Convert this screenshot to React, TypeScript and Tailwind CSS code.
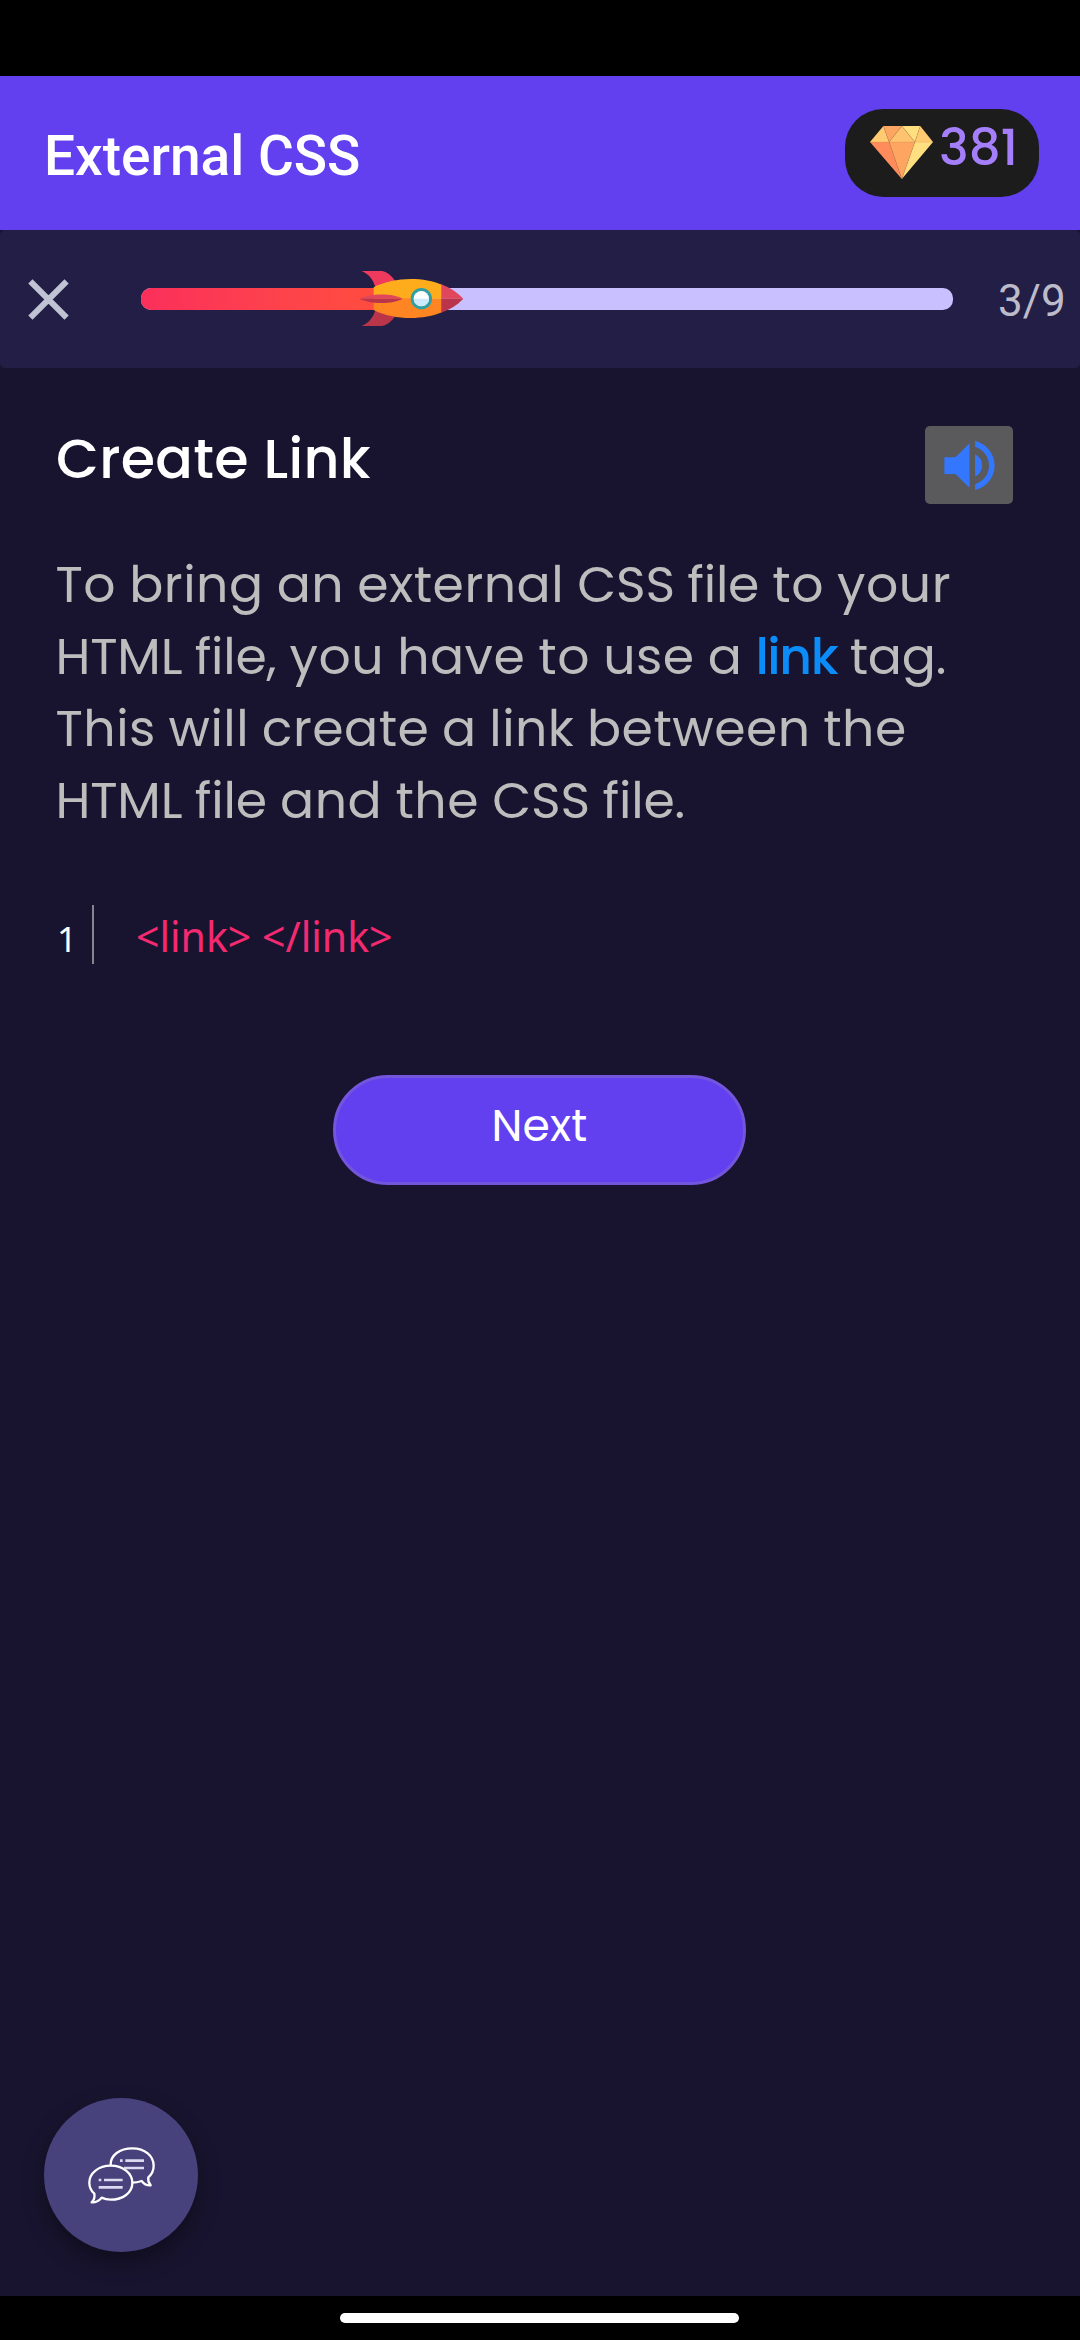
import type { ReactNode } from "react";
import { MdVolumeUp } from "react-icons/md";

const geo = "font-[Poppins,Inter,sans-serif]";

function Diamond() {
  return (
    <svg className="h-[53px] w-[63px] shrink-0" viewBox="150 108 188 158" preserveAspectRatio="none">
      <path d="M190 108L150 156H207Z" fill="#ffca70" />
      <path d="M190 108H245L207 156Z" fill="#ffa562" />
      <path d="M245 108L207 156H284Z" fill="#ffc26e" />
      <path d="M245 108H300L284 156Z" fill="#ffdf80" />
      <path d="M300 108L338 156H284Z" fill="#ffca70" />
      <path d="M150 156H207L245 266Z" fill="#ff8c5a" />
      <path d="M207 156H284L245 266Z" fill="#ffa562" />
      <path d="M284 156H338L245 266Z" fill="#ffdf80" />
      <path d="M150 156H338M190 108L207 156L245 266L284 156L300 108M207 156L245 108L284 156" fill="none" stroke="#c98a4c" strokeOpacity=".55" strokeWidth="1.5" />
    </svg>
  );
}

function Rocket() {
  return (
    <svg className="absolute left-[218px] top-[-17px] h-[55px] w-[105px]" viewBox="57 63 315 165">
      <path d="M64 63H126C142 66 156 78 166 94L106 112C100 88 84 70 64 63Z" fill="#ef3a5d" />
      <path d="M64 228H126C142 225 156 213 166 197L106 180C100 203 84 221 64 228Z" fill="#ba3549" />
      <path d="M101 112C160 80 250 80 306 104V146H101Z" fill="#ffac1c" />
      <path d="M101 180C160 211 250 211 306 187V146H101Z" fill="#ff8422" />
      <path d="M304 103C330 113 352 127 370 146H304Z" fill="#e0475c" />
      <path d="M304 188C330 178 352 165 370 146H304Z" fill="#ba3549" />
      <path d="M58 146C90 129 160 129 188 146Z" fill="#e0475c" />
      <path d="M58 146C90 163 160 163 188 146Z" fill="#ba3549" />
      <circle cx="244" cy="146" r="32" fill="#2f9fa3" />
      <circle cx="244" cy="146" r="23" fill="#ffffff" />
      <path d="M221 146A23 23 0 0 0 267 146Z" fill="#cdeafa" />
    </svg>
  );
}

function ChatIcon() {
  return (
    <svg className="h-[57px] w-[67px]" viewBox="203 200 201 171" fill="none" stroke="#fff" strokeLinejoin="round">
      <g strokeWidth="7">
        <path d="M271 254C270 225 298 204 336 204C374 204 400 227 400 256C400 271 394 282 384 291C382 301 386 309 391 315C380 316 370 310 364 302C355 305 346 307 336 307" />
        <path d="M271 256C308 256 336 279 336 308C336 337 308 358 271 358C261 358 252 356 244 352C236 361 226 367 214 366C221 359 224 350 222 340C212 331 207 320 207 307C207 278 235 256 271 256Z" />
      </g>
      <g stroke="#dcdaf0" strokeWidth="8">
        <path d="M299 241H307M315 241H371M311 263H371M235 299H243M251 299H307M235 321H307" />
      </g>
    </svg>
  );
}

function Line({ className, children }: { className: string; children: ReactNode }) {
  return <span className={`block whitespace-nowrap tracking-[0.5px] ${className}`}>{children}</span>;
}

function Tight({ children }: { children: ReactNode }) {
  return <span className="tracking-[-0.2px]">{children}</span>;
}

export default function App() {
  return (
    <div className="flex h-[2340px] w-[1080px] flex-col overflow-hidden bg-[#18142f]">
      <div className="h-[76px] shrink-0 bg-black" />

      <header className="flex h-[154px] shrink-0 items-center justify-between bg-[#6240ef] pl-[44px] pr-[41px]">
        <h1 className="pt-[6px] font-[Roboto,sans-serif] text-[55px] font-medium leading-[64px] text-white">External CSS</h1>
        <div className="flex h-[88px] w-[194px] items-start rounded-[38px] bg-[#1c1c1c] pl-[25px] pt-[17px]">
          <Diamond />
          <span className={`${geo} -mt-[8px] ml-[6px] text-[50px] font-medium leading-[60px] text-[#a57ffb]`}>381</span>
        </div>
      </header>

      <div className="flex h-[138px] shrink-0 items-center rounded-[5px] bg-[#221e45]">
        <svg className="ml-[28px] h-[41px] w-[41px]" viewBox="0 0 41 41" stroke="#bfc3d3" strokeWidth="6">
          <path d="M2.4 2.4L38.6 38.6M38.6 2.4L2.4 38.6" />
        </svg>
        <div className="relative ml-[72px] h-[22px] w-[812px] rounded-[10px] bg-[#c8c0ff]">
          <div className="h-full w-[271px] rounded-l-[10px] bg-linear-to-r from-[#fb2f5b] to-[#ff5038]" />
          <Rocket />
        </div>
        <span className="ml-[45px] mt-[3px] font-[Roboto,sans-serif] text-[44px] leading-[52px] text-[#bdbbc9]">3/9</span>
      </div>

      <main className="flex flex-1 flex-col">
        <div className="flex h-[181px] items-start justify-between pl-[56px] pr-[67px] pt-[58px]">
          <h2 className={`${geo} text-[55.5px] font-medium leading-[66px] tracking-[0.3px] text-white`}>Create Link</h2>
          <button className="flex h-[78px] w-[88px] items-center justify-center rounded-[5px] bg-[#5a5a5c] text-[#3377ff]">
            <MdVolumeUp size={67} />
          </button>
        </div>

        <p className={`${geo} pl-[55.5px] text-[50.5px] leading-[72px] text-[#bdbdbd]`}>
          <Line className="[word-spacing:-0.9px]">
            To bring an external <Tight>CSS file</Tight> to your
          </Line>
          <Line className="[word-spacing:-0.9px]">
            <Tight>HTML file,</Tight> you have to use a{" "}
            <span className="font-medium tracking-[-1.4px] text-[#0c8cf9]">link</span>
            <Tight> tag.</Tight>
          </Line>
          <Line className="[word-spacing:-1.4px]">This will create a link between the</Line>
          <Line className="[word-spacing:-0.7px]">
            <Tight>HTML file</Tight> and the <Tight>CSS file.</Tight>
          </Line>
        </p>

        <div className="mt-[68px] flex h-[59px] items-center pl-[57px]">
          <span className="mt-[8px] w-[35px] font-['Noto_Sans',sans-serif] text-[35px] leading-[48px] text-white">1</span>
          <span className="h-full w-[2px] bg-[#86848f]" />
          <code className="ml-[42px] mt-[3px] font-['Noto_Sans',sans-serif] text-[41px] leading-[56px] text-[#f42a70]">{"<link> </link>"}</code>
        </div>

        <button className={`${geo} ml-[333px] mt-[111px] flex h-[110px] w-[413px] items-center justify-center rounded-[55px] border-[3px] border-[#7455dd] bg-[#6240ef] pb-[9px] text-[44px] leading-[52px] tracking-[0.2px] text-white`}>
          Next
        </button>

        <button className="mb-[44px] ml-[44px] mt-auto flex size-[154px] items-center justify-center rounded-full bg-[#47417c] shadow-[0_10px_22px_rgba(0,0,0,0.35)]">
          <ChatIcon />
        </button>
      </main>

      <footer className="flex h-[44px] shrink-0 items-start bg-black pl-[340px] pt-[17px]">
        <div className="h-[10px] w-[399px] rounded-full bg-white" />
      </footer>
    </div>
  );
}
